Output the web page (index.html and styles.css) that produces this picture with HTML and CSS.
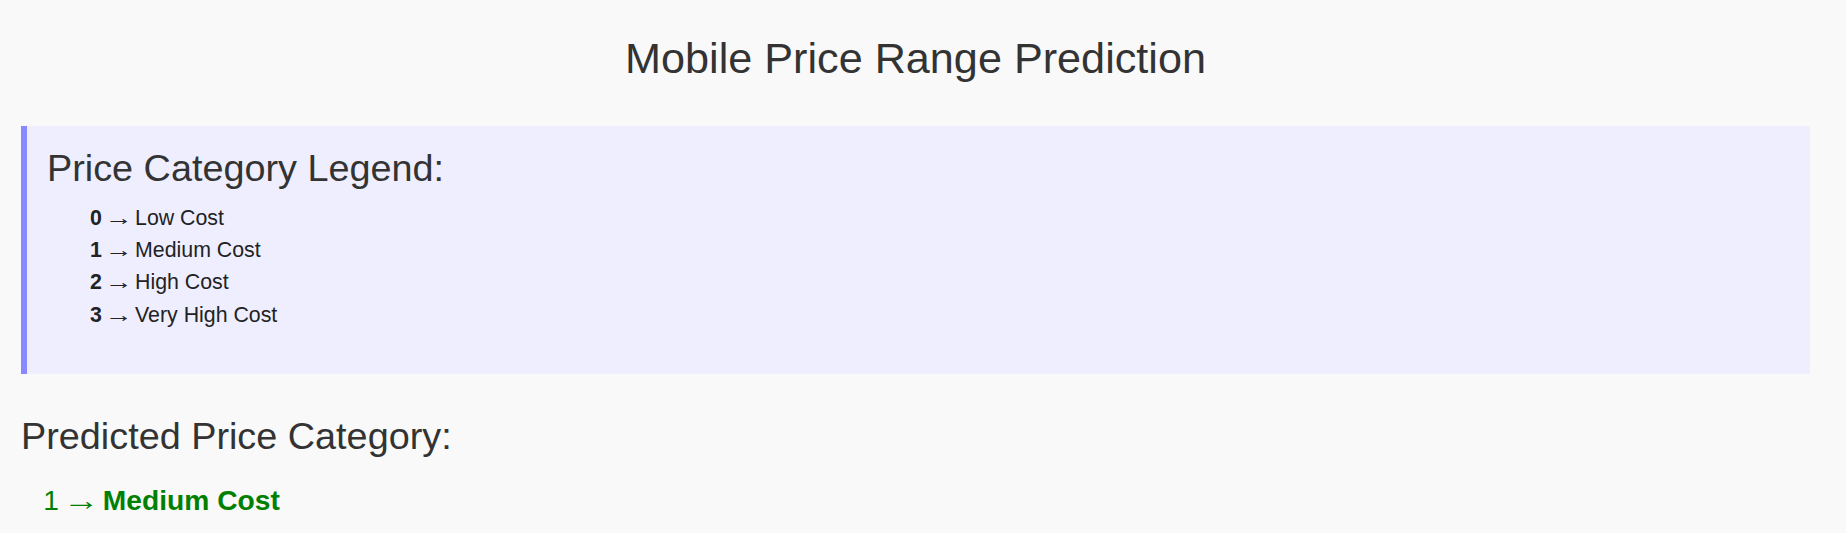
FILE: index.html
```html
<!DOCTYPE html>
<html lang="en">
<head>
<meta charset="utf-8">
<title>Mobile Price Range Prediction</title>
<link rel="stylesheet" href="styles.css">
</head>
<body>
  <h1 class="title">Mobile Price Range Prediction</h1>

  <section class="legend">
    <h2 class="legend-title">Price Category Legend:</h2>
    <ul class="legend-list">
      <li><b>0</b><span class="arrow">→</span>Low Cost</li>
      <li><b>1</b><span class="arrow">→</span>Medium Cost</li>
      <li><b>2</b><span class="arrow">→</span>High Cost</li>
      <li><b>3</b><span class="arrow">→</span>Very High Cost</li>
    </ul>
  </section>

  <h2 class="result-title">Predicted Price Category:</h2>
  <p class="result">1<span class="arrow">→</span><b>Medium Cost</b></p>
</body>
</html>
```

FILE: styles.css
```css
html, body {
  margin: 0;
  padding: 0;
}

body {
  background: #f9f9f9;
  color: #333333;
  font-family: "Liberation Sans", Arial, sans-serif;
  font-size: 21.33px;
  padding: 0 36px 0 21px;
  display: flex;
  flex-direction: column;
}

.title {
  margin: 34px 0 0 0;
  font-size: 43.2px;
  font-weight: normal;
  line-height: 49px;
  text-align: center;
  color: #333333;
}

.legend {
  margin-top: 43px;
  background: #eeeeff;
  border-left: 6px solid #8888ff;
  padding: 21px 20px 0 20px;
  height: 248px;
  box-sizing: border-box;
}

.legend-title {
  margin: 0;
  font-size: 37.8px;
  font-weight: normal;
  line-height: 43px;
  color: #333333;
}

.legend-list {
  list-style: none;
  margin: 12px 0 0 0;
  padding: 0 0 0 43px;
}

.legend-list li {
  line-height: 32.2px;
  color: #222222;
}

.arrow {
  display: inline-block;
  margin: 0 0.278em;
  transform: scaleX(1.3);
  transform-origin: center;
}

.result-title {
  margin: 41px 0 0 0;
  font-size: 37.8px;
  font-weight: normal;
  line-height: 43px;
  color: #333333;
}

.result {
  margin: 26.3px 0 0 22.3px;
  font-size: 28.2px;
  line-height: 32px;
  color: #008000;
}
```
